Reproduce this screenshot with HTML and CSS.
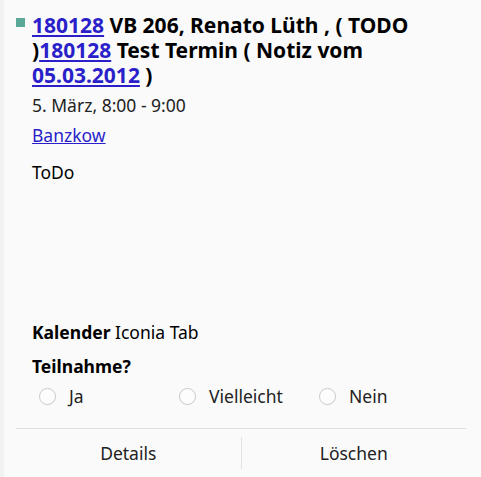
FILE: index.html
```html
<!DOCTYPE html>
<html lang="de">
<head>
    <meta charset="UTF-8">
    <title>Termin</title>
    <link rel="stylesheet" href="styles.css">
</head>
<body>
    <div class="dialog">
        <div class="event">
            <div class="title-row">
                <span class="swatch"></span>
                <h2 class="title"><a href="#">180128</a> VB 206, Renato Lüth , ( TODO )<a href="#">180128</a> Test Termin ( Notiz vom <a href="#">05.03.2012</a> )</h2>
            </div>
            <div class="when">5. März, 8:00 - 9:00</div>
            <div class="where"><a href="#">Banzkow</a></div>
            <div class="description">ToDo</div>
        </div>
        <div class="calendar"><b>Kalender</b> Iconia Tab</div>
        <div class="response">
            <div class="response-label">Teilnahme?</div>
            <div class="options">
                <label class="option"><span class="radio"></span>Ja</label>
                <label class="option"><span class="radio"></span>Vielleicht</label>
                <label class="option"><span class="radio"></span>Nein</label>
            </div>
        </div>
        <div class="buttons">
            <button>Details</button>
            <button>Löschen</button>
        </div>
    </div>
</body>
</html>
```

FILE: styles.css
```css
html, body {
    margin: 0;
    height: 100%;
}
body {
    font-family: "Noto Sans", "Open Sans", sans-serif;
    background-color: #fafafa;
    color: #111;
}
a {
    color: #2a1fc9;
}
.dialog {
    height: 477px;
    display: flex;
    flex-direction: column;
    border-left: 4px solid #f2f2f2;
    box-sizing: border-box;
}
.event {
    flex: 1;
    padding: 13px 16px 0 12px;
}
.title-row {
    display: flex;
    gap: 7px;
}
.swatch {
    width: 9px;
    height: 9px;
    margin-top: 5px;
    background-color: #5aa898;
    flex-shrink: 0;
}
.title {
    margin: 0;
    font-size: 21px;
    line-height: 25px;
    font-weight: bold;
    color: #000;
}
.when {
    margin: 5px 0 0 16px;
    font-size: 17.5px;
    line-height: 24px;
    color: #222;
}
.where {
    margin: 6px 0 0 16px;
    font-size: 17.5px;
    line-height: 24px;
}
.description {
    margin: 13px 0 0 16px;
    font-size: 17.5px;
    line-height: 24px;
    color: #000;
}
.calendar {
    margin-left: 28px;
    font-size: 17.5px;
    line-height: 24px;
    color: #000;
}
.response {
    margin: 10px 0 0 28px;
}
.response-label {
    font-size: 17.5px;
    line-height: 24px;
    font-weight: bold;
    color: #000;
}
.options {
    display: flex;
    padding-left: 7px;
    margin-top: 6px;
}
.option {
    width: 140px;
    display: flex;
    align-items: center;
    gap: 13px;
    font-size: 17.5px;
    line-height: 24px;
    color: #222;
}
.radio {
    width: 15px;
    height: 15px;
    border: 1px solid #c8c8c8;
    border-radius: 50%;
    background-color: #fdfdfd;
}
.buttons {
    display: flex;
    margin: 20px 15px 0 12px;
    border-top: 1px solid #e0e0e0;
    height: 48px;
    align-items: center;
}
.buttons button {
    flex: 1;
    height: 32px;
    border: none;
    background: none;
    font-family: inherit;
    font-size: 17.5px;
    color: #222;
}
.buttons button + button {
    border-left: 1px solid #e4e4e4;
}
```
